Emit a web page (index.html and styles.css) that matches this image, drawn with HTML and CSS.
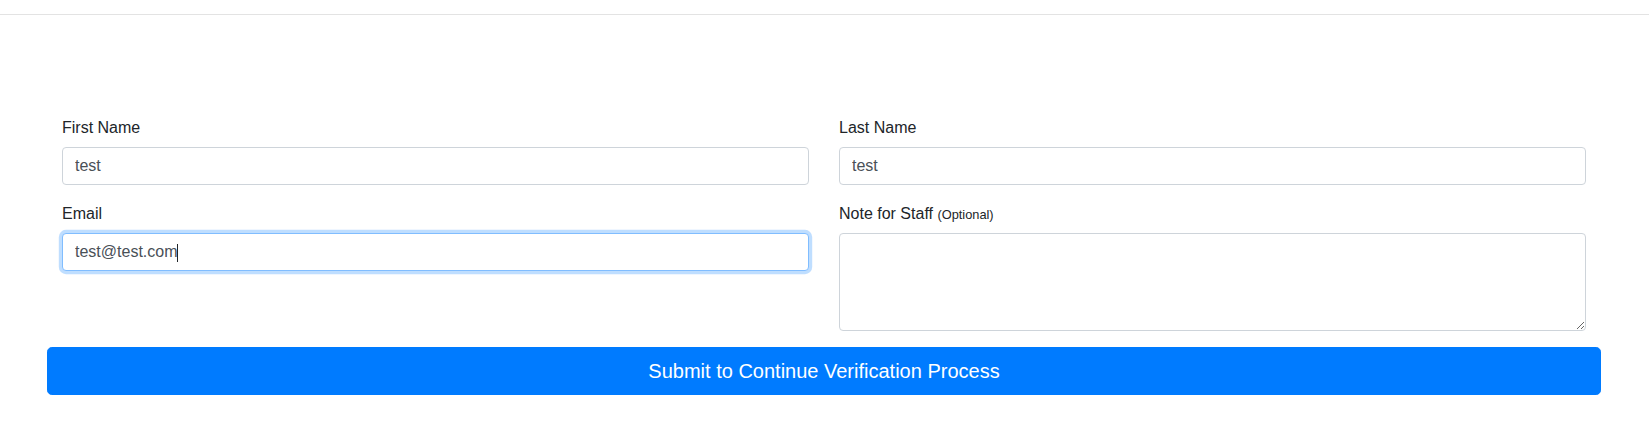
FILE: index.html
```html
<!DOCTYPE html>
<html lang="en">
<head>
<meta charset="utf-8">
<title>Verification</title>
<link rel="stylesheet" href="styles.css">
</head>
<body>
<header class="topbar"></header>
<main class="page">
  <form class="container">
    <div class="form-grid">
      <div class="form-group">
        <label class="form-label" for="first">First Name</label>
        <input class="form-control" id="first" type="text" value="test">
      </div>
      <div class="form-group">
        <label class="form-label" for="last">Last Name</label>
        <input class="form-control" id="last" type="text" value="test">
      </div>
      <div class="form-group">
        <label class="form-label" for="email">Email</label>
        <div class="field-wrap">
          <input class="form-control is-focused" id="email" type="email" value="test@test.com">
          <span class="caret"></span>
        </div>
      </div>
      <div class="form-group">
        <label class="form-label" for="note">Note for Staff <small class="optional">(Optional)</small></label>
        <textarea class="form-control note" id="note"></textarea>
      </div>
    </div>
    <button class="btn-submit" type="button">Submit to Continue Verification Process</button>
  </form>
</main>
</body>
</html>
```
FILE: styles.css
```css
* { box-sizing: border-box; }

html, body {
  margin: 0;
  background: #fff;
  font-family: "Liberation Sans", Arial, Helvetica, sans-serif;
  font-size: 16px;
  line-height: 1.5;
  color: #212529;
}

.topbar {
  height: 15px;
  border-bottom: 1px solid #e3e3e3;
}

.page {
  padding: 100px 48px 0 47px;
}

.container {
  width: 100%;
}

.form-grid {
  display: grid;
  grid-template-columns: 1fr 1fr;
  column-gap: 30px;
  padding: 0 15px;
}

.form-group {
  margin-bottom: 16px;
}

.form-label {
  display: block;
  padding-top: 1px;
  margin-bottom: 7px;
}

.optional {
  font-size: 80%;
}

.field-wrap {
  position: relative;
}

.form-control {
  display: block;
  width: 100%;
  height: 38px;
  padding: 6px 12px;
  font-family: inherit;
  font-size: 16px;
  line-height: 1.5;
  color: #495057;
  background: #fff;
  border: 1px solid #ced4da;
  border-radius: 4px;
  outline: none;
  margin: 0;
}

.form-control.is-focused {
  border-color: #80bdff;
  box-shadow: 0 0 0 3.2px rgba(0, 123, 255, 0.25);
}

.caret {
  position: absolute;
  left: 115px;
  top: 11px;
  width: 1px;
  height: 18px;
  background: #212529;
}

.note {
  height: 98px;
  resize: vertical;
}

.btn-submit {
  display: block;
  width: 100%;
  height: 48px;
  padding: 8px 16px;
  font-family: inherit;
  font-size: 20px;
  line-height: 1.5;
  color: #fff;
  background: #007bff;
  border: 1px solid #007bff;
  border-radius: 4.8px;
  text-align: center;
  cursor: pointer;
}
```
